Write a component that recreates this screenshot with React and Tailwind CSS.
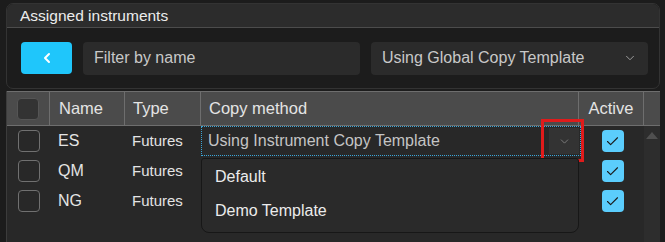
import React from 'react';
import { ChevronLeft, ChevronDown, Check } from 'lucide-react';

const rows = [
    { name: 'ES', type: 'Futures' },
    { name: 'QM', type: 'Futures' },
    { name: 'NG', type: 'Futures' },
];

const font = { fontFamily: '"Liberation Sans", Arial, sans-serif' };

const ActiveBox = () => (
    <div className="w-[22px] h-[22px] rounded-[4px] bg-[#5bcdfd] flex items-center justify-center">
        <Check size={15} strokeWidth={1.75} className="text-[#1a1a1a]" />
    </div>
);

const App = () => {
    return (
        <div style={font} className="w-[665px] h-[242px] bg-[#1c1c1c] overflow-hidden pt-[3px] pl-[6px] pr-[5px] text-[16px]">
            {/* panel */}
            <div className="rounded-[7px] border border-[#333] bg-[#1c1c1c] overflow-hidden">
                <div className="h-[24px] bg-[#2c2c2c] border-b border-[#4c4c4c] pl-[13px] flex items-center text-[#ececec] leading-none text-[15.5px]">
                    Assigned instruments
                </div>
                <div className="h-[60px] flex items-center pl-[14px] pr-[11px] gap-[11px]">
                    <button className="w-[51px] h-[32px] rounded-[4px] bg-[#1fc6fb] flex items-center justify-center">
                        <ChevronLeft size={16} strokeWidth={3} className="text-white" />
                    </button>
                    <div className="w-[277px] h-[33px] rounded-[4px] bg-[#2b2b2b] flex items-center pl-[11px] text-[#c8c8c8]">
                        Filter by name
                    </div>
                    <div className="flex-1 h-[33px] rounded-[4px] bg-[#2b2b2b] flex items-center justify-between pl-[11px] pr-[11px] text-[#c8c8c8]">
                        <span>Using Global Copy Template</span>
                        <ChevronDown size={14} strokeWidth={1.5} className="text-[#aaa]" />
                    </div>
                </div>
            </div>

            {/* table */}
            <div className="relative mt-[2px] h-[160px] bg-[#282828] border-l border-[#3c3c3c] text-[#e4e4e4]">
                <div className="flex h-[35px] bg-[#4b4b4b] border-y border-[#6e6e6e] text-[16.5px]">
                    <div className="w-[43px] flex items-center justify-center border-r border-[#6e6e6e]">
                        <div className="w-[22px] h-[22px] rounded-[4px] bg-[#333] border border-[#555]" />
                    </div>
                    <div className="w-[75px] flex items-center pl-[9px] border-r border-[#6e6e6e]">Name</div>
                    <div className="w-[76px] flex items-center pl-[8px] border-r border-[#6e6e6e]">Type</div>
                    <div className="w-[378px] flex items-center pl-[8px] border-r border-[#6e6e6e]">Copy method</div>
                    <div className="w-[65px] flex items-center justify-center border-r border-[#6e6e6e]">Active</div>
                    <div className="flex-1" />
                </div>

                <div className="flex">
                    <div className="flex-1">
                        {rows.map((r, i) => (
                            <div key={r.name} className="flex h-[30px] items-center">
                                <div className="w-[43px] flex justify-center">
                                    <div className="w-[22px] h-[22px] rounded-[4px] border border-[#707070]" />
                                </div>
                                <div className="w-[75px] pl-[8px]">{r.name}</div>
                                <div className="w-[76px] pl-[7px] text-[15px]">{r.type}</div>
                                <div className="w-[380px] h-full">
                                    {i === 0 && (
                                        <div className="h-full border border-dotted border-[#3aa6d8] flex items-center justify-between pl-[6px] text-[#c4c4c4]">
                                            <span>Using Instrument Copy Template</span>
                                            <div className="relative w-[30px] h-[26px] bg-[#333] flex items-center justify-center mr-[1px]">
                                                <ChevronDown size={13} strokeWidth={1.5} className="text-[#888]" />
                                                <div className="absolute left-[-8px] top-[-9px] w-[43px] h-[43px] border-[3px] border-[#e01b1b]" />
                                            </div>
                                        </div>
                                    )}
                                </div>
                                <div className="w-[63px] flex justify-center">
                                    <ActiveBox />
                                </div>
                            </div>
                        ))}
                    </div>
                    <div className="w-[17px] h-[125px] bg-[#2d2d2d] flex justify-center pt-[6px]">
                        <div className="w-0 h-0 border-l-[6px] border-r-[6px] border-b-[7px] border-l-transparent border-r-transparent border-b-[#505050]" />
                    </div>
                </div>

                {/* open dropdown */}
                <div className="absolute left-[194px] top-[67px] w-[378px] h-[75px] bg-[#2a2a2a] border border-[#171717] rounded-b-[8px] rounded-t-[3px] pt-[1px]">
                    <div className="h-[34px] flex items-center pl-[13px] text-[#ececec]">Default</div>
                    <div className="h-[34px] flex items-center pl-[13px] text-[#ececec]">Demo Template</div>
                </div>
            </div>
        </div>
    );
};

export default App;
